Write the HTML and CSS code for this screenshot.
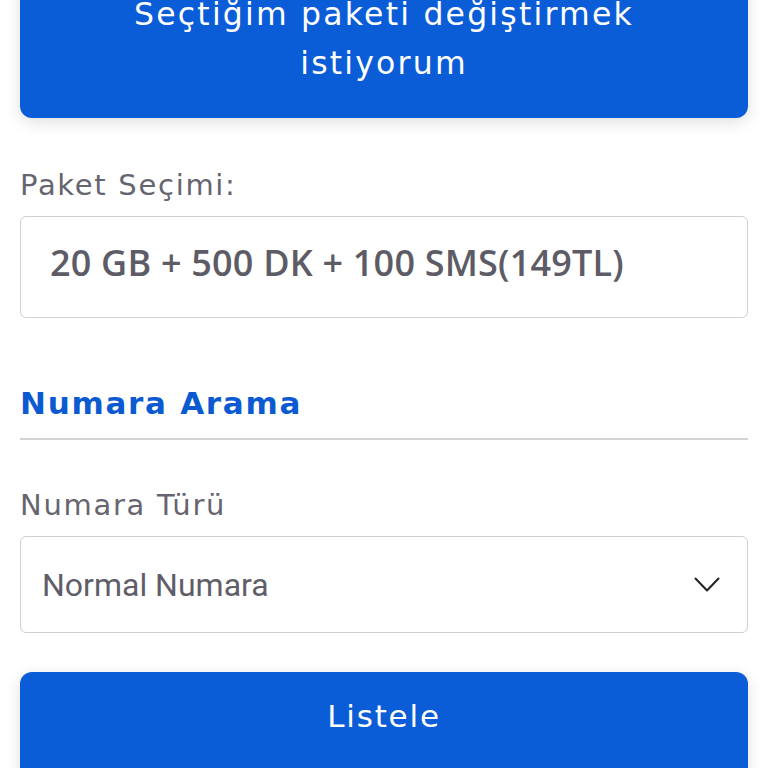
FILE: index.html
```html
<!DOCTYPE html>
<html lang="tr">
<head>
<meta charset="utf-8">
<link rel="stylesheet" href="styles.css">
</head>
<body>
<main class="page">
  <button class="btn btn-top">Seçtiğim paketi değiştirmek<br>istiyorum</button>
  <label class="label label-paket">Paket Seçimi:</label>
  <div class="field field-paket">20 GB + 500 DK + 100 SMS(149TL)</div>
  <h2 class="section-title">Numara Arama</h2>
  <div class="rule"></div>
  <label class="label label-tur">Numara Türü</label>
  <div class="field field-select">
    <span class="select-text">Normal Numara</span>
    <svg class="chevron" width="26" height="16" viewBox="0 0 26 16"><path d="M1.5 1.5 L13 13.5 L24.5 1.5" fill="none" stroke="#222" stroke-width="2" stroke-linecap="round" stroke-linejoin="round"/></svg>
  </div>
  <button class="btn btn-list">Listele</button>
</main>
</body>
</html>
```
FILE: styles.css
```css
html, body { margin: 0; padding: 0; background: #fff; }
body { font-family: "DejaVu Sans", "Open Sans", sans-serif; overflow: hidden; height: 768px; }
.page { padding: 0 20px; display: flex; flex-direction: column; }
.btn {
  display: block; width: 100%; border: 0; background: #0b5dd7; color: #fff;
  font-family: "DejaVu Sans", sans-serif; font-weight: 400; border-radius: 12px;
  box-shadow: 0 4px 16px rgba(0,0,0,0.13);
}
.btn-top {
  margin-top: -30px; padding: 20px 0 30px; font-size: 31.5px; line-height: 49px; letter-spacing: 2.2px;
}
.label { color: #66656f; font-size: 29px; line-height: 32px; letter-spacing: 1.7px; }
.label-paket { margin-top: 51px; }
.field {
  border: 1.5px solid #cfcfcf; border-radius: 6px; box-sizing: border-box;
  margin-top: 15px;
}
.field-paket {
  height: 102px; display: flex; align-items: center; padding: 0 0 10px 29px;
  font-family: "Open Sans", sans-serif;
  font-size: 36px; font-weight: 600; color: #5d5c66; letter-spacing: 0.2px;
}
.section-title {
  margin: 65px 0 0; color: #0b5ad1; font-size: 31px; font-weight: 700; line-height: 40px; letter-spacing: 1.7px;
}
.rule { height: 2px; background: #d4d4d4; margin-top: 15px; }
.label-tur { margin-top: 49px; }
.field-select {
  height: 97px; display: flex; align-items: center; justify-content: space-between;
  padding: 0 27px 0 21px; margin-top: 15px;
}
.select-text { font-family: Roboto, sans-serif; font-size: 32px; color: #5f5e68; }
.btn-list { margin-top: 39px; height: 110px; padding: 0 0 22px; font-size: 31px; letter-spacing: 1.8px; }
```
